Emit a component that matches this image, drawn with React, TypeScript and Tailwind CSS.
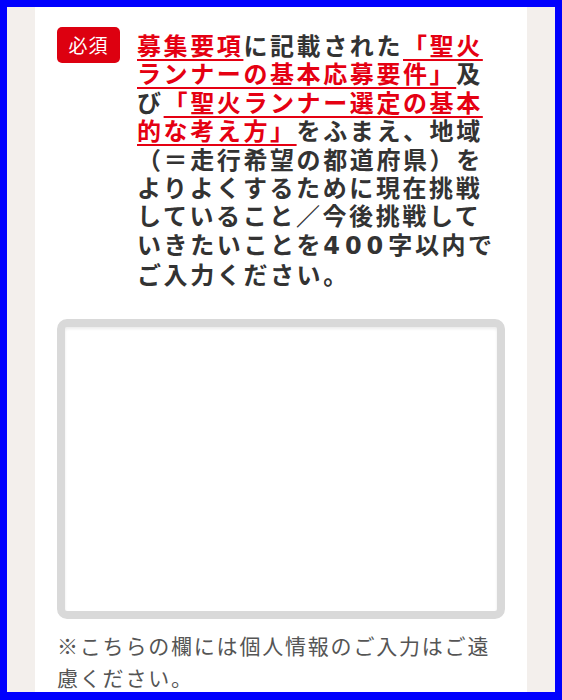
const JP = '"Noto Sans CJK JP", "Noto Sans", sans-serif';

function RedLink({ children }: { children: React.ReactNode }) {
  return (
    <span className="text-[#e50012] underline decoration-[#e50012] decoration-2 underline-offset-[4px]">
      {children}
    </span>
  );
}

export default function App() {
  return (
    <div
      className="h-[700px] w-[562px] border-[#0000fe] border-t-[7px] border-x-[7px] border-b-[8px] bg-[#f3efec] overflow-hidden"
      style={{ fontFamily: JP }}
    >
      <div className="mx-[28px] h-full bg-white px-[22px] pt-[20px]">
        {/* question */}
        <div className="flex items-start gap-[17px]">
          <span className="flex h-[36px] w-[63px] shrink-0 items-center justify-center rounded-[5px] bg-[#dd0010] text-[19px] tracking-[1px] text-white">
            必須
          </span>
          <p className="mt-[4px] flex-1 text-[24px] font-bold leading-[28.4px] tracking-[2.6px] text-[#333333]">
            <RedLink>募集要項</RedLink>に記載された
            <RedLink>「聖火ランナーの基本応募要件」</RedLink>及び
            <RedLink>「聖火ランナー選定の基本的な考え方」</RedLink>
            をふまえ、地域（＝走行希望の都道府県）をよりよくするために現在挑戦していること／今後挑戦していきたいことを
            <span className="font-['DejaVu_Sans',sans-serif] tracking-[5px]">400</span>字以内でご入力ください。
          </p>
        </div>

        {/* textarea */}
        <div className="mt-[30px] h-[300px] rounded-[10px] border-[8px] border-[#d9d9d9] bg-white shadow-[inset_0_2px_3px_rgba(0,0,0,0.08)]" />

        <p className="mt-[10px] text-[21px] leading-[32px] tracking-[1.8px] text-[#555555]">
          ※こちらの欄には個人情報のご入力はご遠慮ください。
        </p>
      </div>
    </div>
  );
}
